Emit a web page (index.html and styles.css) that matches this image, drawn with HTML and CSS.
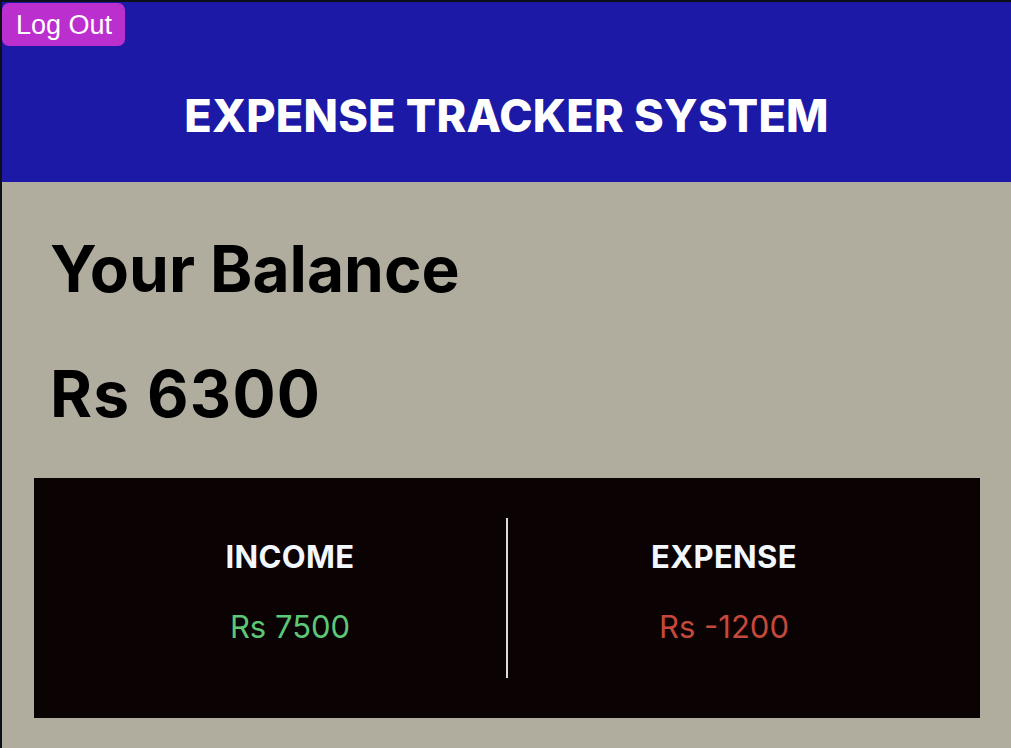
FILE: index.html
```html
<!DOCTYPE html>
<html lang="en">
<head>
<meta charset="utf-8">
<title>Expense Tracker</title>
<link rel="stylesheet" href="styles.css">
</head>
<body>
<div class="app">
  <header class="header">
    <button class="logout">Log Out</button>
    <h1 class="title">EXPENSE TRACKER SYSTEM</h1>
  </header>
  <main class="main">
    <h2 class="balance-label">Your Balance</h2>
    <h2 class="balance-value">Rs 6300</h2>
    <section class="card">
      <div class="col">
        <h3 class="col-title">INCOME</h3>
        <p class="amount income">Rs 7500</p>
      </div>
      <div class="divider"></div>
      <div class="col">
        <h3 class="col-title">EXPENSE</h3>
        <p class="amount expense">Rs -1200</p>
      </div>
    </section>
  </main>
</div>
</body>
</html>
```

FILE: styles.css
```css
html, body {
  margin: 0;
  padding: 0;
  height: 100%;
  background: #0c0f18;
  overflow: hidden;
}

.app {
  margin: 2px 0 0 2px;
  min-height: calc(100% - 2px);
  background: #b0ad9f;
  font-family: Inter, "Noto Sans", sans-serif;
}

.header {
  background: #1c19a6;
  height: 180px;
  display: flex;
  flex-direction: column;
  align-items: center;
}

.logout {
  align-self: flex-start;
  margin: 1px 0 0 0;
  height: 43px;
  padding: 1px 13px 0 14px;
  border: none;
  border-radius: 7px;
  background: #bb2fcf;
  color: #fff;
  font-family: "Liberation Sans", Arial, sans-serif;
  font-size: 27px;
  line-height: 1;
  cursor: pointer;
}

.title {
  margin: 43px 0 0 0;
  color: #fff;
  font-size: 45px;
  font-weight: 800;
  line-height: 54px;
  letter-spacing: 0.2px;
}

.main {
  padding: 48px 31px 30px 32px;
}

.balance-label,
.balance-value {
  margin: 0 0 48px 16px;
  font-size: 64px;
  font-weight: 700;
  line-height: 77px;
  color: #000;
}

.balance-value {
  margin-bottom: 46px;
  letter-spacing: 1.3px;
}

.card {
  background: #0b0203;
  padding: 40px;
  height: 160px;
  display: flex;
}

.col {
  flex: 1;
  display: flex;
  flex-direction: column;
  align-items: center;
}

.divider {
  width: 2px;
  background: #dcdcdc;
}

.col-title {
  margin: 20px 0 0 0;
  color: #f3f8ff;
  font-size: 31px;
  font-weight: 700;
  line-height: 38px;
  letter-spacing: 0.35px;
}

.amount {
  margin: 32px 0 0 0;
  font-size: 31px;
  font-weight: 400;
  line-height: 38px;
}

.income { color: #5cc776; }
.expense { color: #c4493a; }
```
